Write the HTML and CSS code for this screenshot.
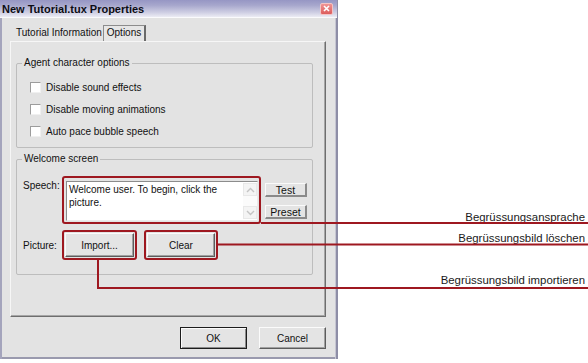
FILE: index.html
```html
<!DOCTYPE html>
<html>
<head>
<meta charset="utf-8">
<link rel="stylesheet" href="styles.css">
</head>
<body>
<div class="page">
  <div class="window">
    <div class="titlebar">
      <span class="title">New Tutorial.tux Properties</span>
      <span class="close"><svg width="7" height="7" viewBox="0 0 7 7"><path d="M1 1L6 6M6 1L1 6" stroke="#fff" stroke-width="1.6"/></svg></span>
    </div>
    <div class="content">
      <div class="tabs">
        <div class="tab">Tutorial Information</div>
        <div class="tab active">Options</div>
      </div>
      <div class="panel">
        <fieldset class="group agent">
          <legend>Agent character options</legend>
          <label class="check"><span class="box"></span>Disable sound effects</label>
          <label class="check"><span class="box"></span>Disable moving animations</label>
          <label class="check"><span class="box"></span>Auto pace bubble speech</label>
        </fieldset>
        <fieldset class="group welcome">
          <legend>Welcome screen</legend>
          <div class="speech-row">
            <span class="lbl">Speech:</span>
            <div class="callout speech-box">
              <div class="textarea">
                <div class="text">Welcome user. To begin, click the picture.</div>
                <div class="scroll">
                  <span class="arrow"><svg width="9" height="6" viewBox="0 0 9 6"><path d="M1 5L4.5 1.5L8 5" fill="none" stroke="#c4c4c4" stroke-width="1.4"/></svg></span>
                  <span class="track"></span>
                  <span class="arrow"><svg width="9" height="6" viewBox="0 0 9 6"><path d="M1 1L4.5 4.5L8 1" fill="none" stroke="#c4c4c4" stroke-width="1.4"/></svg></span>
                </div>
              </div>
            </div>
            <div class="side">
              <span class="sbtn">Test</span>
              <span class="sbtn">Preset</span>
            </div>
          </div>
          <div class="picture-row">
            <span class="lbl">Picture:</span>
            <div class="callout pbox"><span class="btn">Import...</span></div>
            <div class="callout pbox"><span class="btn">Clear</span></div>
          </div>
        </fieldset>
      </div>
      <div class="footer">
        <span class="btn big ok">OK</span>
        <span class="btn big">Cancel</span>
      </div>
    </div>
  </div>
  <div class="notes">
    <div class="note n1">Begrüssungsansprache</div>
    <div class="note n2">Begrüssungsbild löschen</div>
    <div class="note n3">Begrüssungsbild importieren</div>
  </div>
</div>
<svg class="leaders" width="588" height="363" viewBox="0 0 588 363">
  <path d="M261 223H588" stroke="#9e1820" stroke-width="2" fill="none"/>
  <path d="M218 244.5H588" stroke="#9e1820" stroke-width="2" fill="none"/>
  <path d="M98 260V288H588" stroke="#9e1820" stroke-width="2" fill="none"/>
</svg>
</body>
</html>
```
FILE: styles.css
```css
html, body {
  margin: 0;
  padding: 0;
  background: #fff;
}
body {
  width: 588px;
  height: 363px;
  position: relative;
  overflow: hidden;
  font-family: "Liberation Sans", Arial, sans-serif;
  font-size: 10px;
  color: #111;
}
.page {
  display: flex;
}
.window {
  width: 338px;
  height: 359px;
  box-sizing: border-box;
  background: #e3e3e3;
  box-shadow: inset 2px 0 0 #a4a4bc, inset -2px 0 0 #8e8ea6, inset -3px 0 0 #c6c6d2, inset 0 -2px 0 #9a9aae;
  display: flex;
  flex-direction: column;
}
.titlebar {
  height: 17px;
  border-bottom: 1px solid #fafafc;
  background: linear-gradient(to bottom, #9696c4 0%, #a6a6cc 30%, #d0d0e4 75%, #ececf4 100%);
  display: flex;
  align-items: center;
  justify-content: space-between;
  padding: 0 4px 0 2px;
  margin-right: 1px;
}
.title {
  font-weight: bold;
  font-size: 11px;
  color: #0c0c14;
  margin-top: 1px;
}
.close {
  width: 13px;
  height: 12px;
  box-sizing: border-box;
  border: 1px solid #f4c4c4;
  border-radius: 2px;
  background: linear-gradient(to bottom, #f09494, #dc5c5c);
  display: flex;
  align-items: center;
  justify-content: center;
}
.close svg { display: block; }
.content {
  padding: 6px 12px 0 10px;
  display: flex;
  flex-direction: column;
}
.tabs {
  display: flex;
  height: 17px;
  align-items: flex-end;
}
.tab {
  height: 17px;
  line-height: 17px;
  box-sizing: border-box;
}
.tab:first-child {
  width: 93px;
  padding-left: 6px;
  white-space: nowrap;
}
.tab.active {
  width: 43px;
  height: 16px;
  line-height: 14px;
  text-align: center;
  border: 1px solid #8c8c8c;
  border-right: 2px solid #6a6a6a;
  border-bottom: none;
  background: #e6e6e6;
}
.panel {
  width: 316px;
  height: 276px;
  box-sizing: border-box;
  border-top: 1px solid #f6f6f6;
  border-left: 1px solid #f6f6f6;
  border-right: 1px solid #6e6e6e;
  border-bottom: 1px solid #6e6e6e;
  box-shadow: inset -1px -1px 0 #a6a6a6;
  padding: 15px 12px 0 5px;
}
.group {
  margin: 0;
  border: 1px solid #bdbdbd;
  border-radius: 2px;
  min-width: 0;
}
.group legend {
  font-size: 10px;
  line-height: 12px;
  padding: 0 2px;
}
.agent {
  padding: 7px 0 5px 13px;
}
.agent legend {
  margin-left: -8px;
}
.check {
  display: flex;
  align-items: center;
  height: 22px;
  gap: 5px;
}
.box {
  width: 9px;
  height: 9px;
  background: #fff;
  border-top: 1px solid #9c9c9c;
  border-left: 1px solid #9c9c9c;
  border-right: 1px solid #f0f0f0;
  border-bottom: 1px solid #f0f0f0;
}
.welcome {
  margin-top: 5px;
  padding: 11px 0 14px 6px;
}
.welcome legend {
  margin-left: -1px;
}
.speech-row {
  display: flex;
  align-items: flex-start;
}
.lbl {
  width: 39px;
  flex: none;
}
.speech-row .lbl {
  margin-top: 4px;
}
.callout {
  border: 2px solid #9e1820;
  border-radius: 3px;
  box-sizing: border-box;
}
.speech-box {
  width: 199px;
  height: 48px;
  padding: 3px 1px 1px 2px;
}
.textarea {
  height: 40px;
  background: #fff;
  border-top: 1px solid #8c8c8c;
  border-left: 1px solid #8c8c8c;
  border-right: 1px solid #ececec;
  border-bottom: 1px solid #ececec;
  box-sizing: border-box;
  display: flex;
}
.text {
  flex: 1;
  padding: 1px 0 0 2px;
  line-height: 13px;
  font-size: 10px;
}
.scroll {
  width: 14px;
  display: flex;
  flex-direction: column;
  padding: 1px 0;
}
.arrow {
  height: 13px;
  background: #f4f4f4;
  border: 1px solid #e8e8e8;
  box-sizing: border-box;
  display: flex;
  align-items: center;
  justify-content: center;
}
.track {
  flex: 1;
  background: #fbfbfb;
}
.side {
  display: flex;
  flex-direction: column;
  gap: 8px;
  padding-top: 7px;
  margin-left: 4px;
}
.sbtn {
  width: 42px;
  height: 14px;
  box-sizing: border-box;
  line-height: 12px;
  text-align: center;
  border-top: 1px solid #fafafa;
  border-left: 1px solid #fafafa;
  border-right: 2px solid #8a8a8a;
  border-bottom: 2px solid #8a8a8a;
  background: #e4e4e4;
  font-size: 10.5px;
}
.picture-row {
  display: flex;
  align-items: center;
  margin-top: 6px;
  gap: 0;
}
.pbox {
  width: 75px;
  height: 30px;
  padding: 1px;
  display: flex;
}
.pbox + .pbox {
  width: 74px;
  margin-left: 7px;
}
.btn {
  flex: 1;
  box-sizing: border-box;
  display: flex;
  align-items: center;
  justify-content: center;
  background: #e4e4e4;
  border-top: 1px solid #fbfbfb;
  border-left: 1px solid #fbfbfb;
  border-right: 1px solid #5c5c5c;
  border-bottom: 1px solid #5c5c5c;
  box-shadow: inset -1px -1px 0 #a0a0a0;
}
.footer {
  display: flex;
  justify-content: flex-end;
  gap: 12px;
  margin-top: 10px;
}
.btn.big {
  flex: none;
  width: 67px;
  height: 22px;
}
.btn.ok {
  border: 1px solid #1c1c1c;
  box-shadow: inset 1px 1px 0 #fbfbfb, inset -1px -1px 0 #8a8a8a;
}
.notes {
  flex: 1;
  display: flex;
  flex-direction: column;
  align-items: flex-end;
  padding-right: 3px;
  font-size: 11.4px;
  line-height: 14px;
  color: #1a1a1a;
}
.n1 { margin-top: 210px; }
.n2 { margin-top: 7px; }
.n3 { margin-top: 28px; }
.leaders {
  position: absolute;
  left: 0;
  top: 0;
  pointer-events: none;
}
```
